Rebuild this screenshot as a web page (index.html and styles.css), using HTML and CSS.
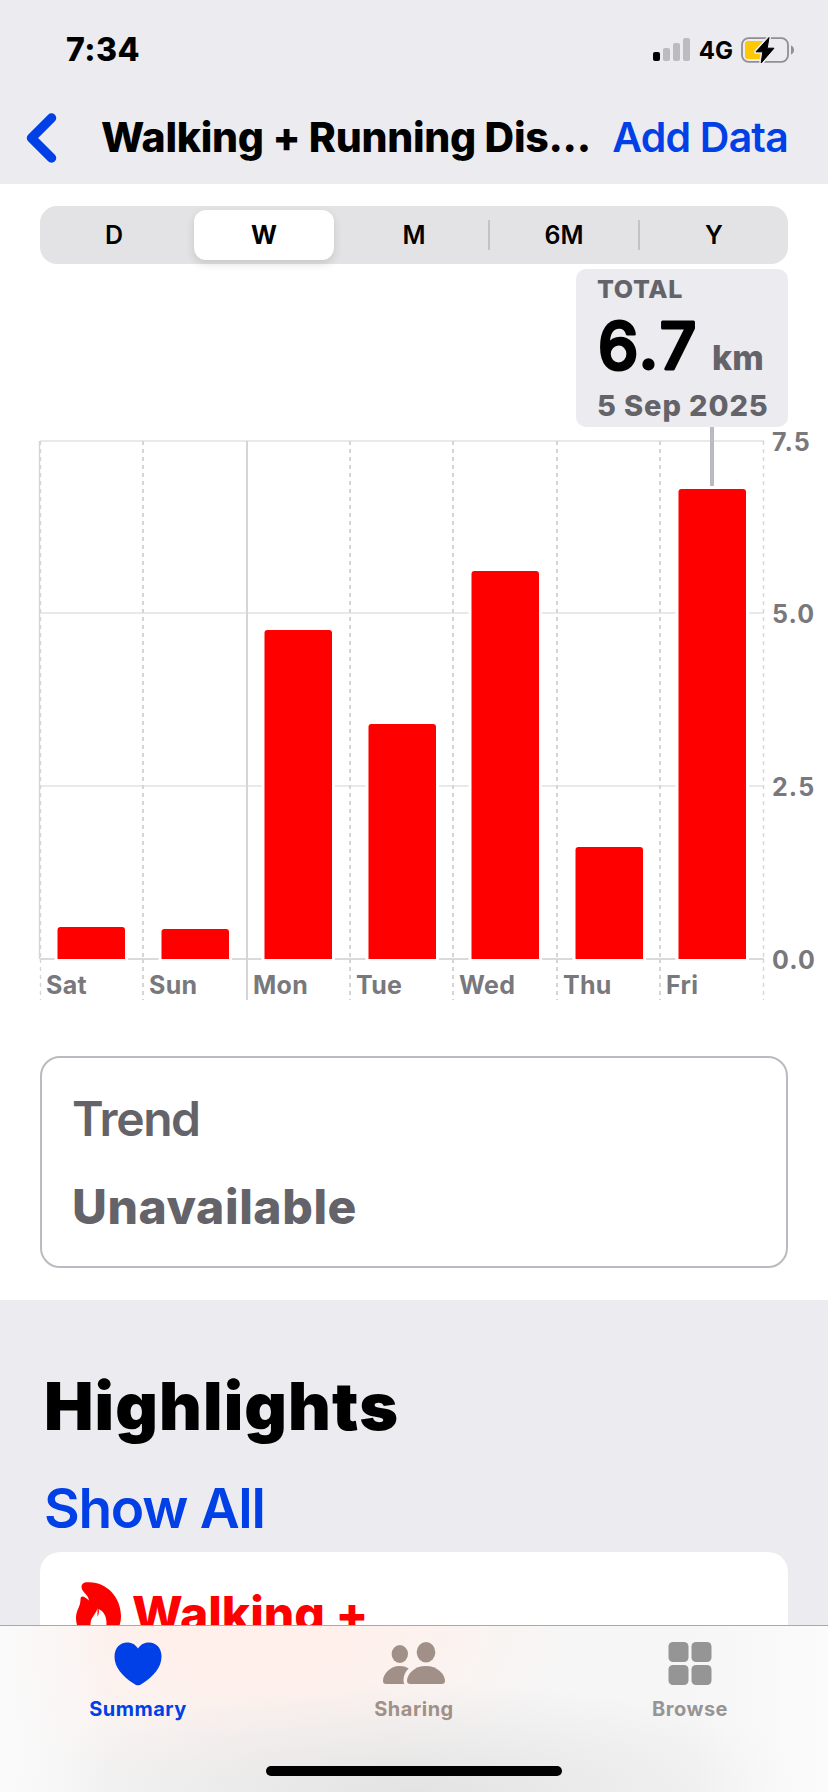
FILE: index.html
```html
<!DOCTYPE html>
<html lang="en">
<head>
    <meta charset="utf-8">
    <title>Walking + Running Distance</title>
    <link rel="stylesheet" href="styles.css">
</head>
<body>
    <header class="header">
        <div class="status">
            <span class="time">7:34</span>
            <div class="status-icons">
                <svg class="signal" width="37" height="24" viewBox="0 0 37 24">
                    <rect x="0" y="14" width="7" height="9" rx="2" fill="#000"/>
                    <rect x="10" y="10" width="7" height="13" rx="2" fill="#bcbbc0"/>
                    <rect x="20" y="5" width="7" height="18" rx="2" fill="#bcbbc0"/>
                    <rect x="30" y="0" width="7" height="23" rx="2" fill="#bcbbc0"/>
                </svg>
                <span class="network">4G</span>
                <svg class="battery" width="54" height="28" viewBox="0 0 54 28">
                    <rect x="1" y="2.2" width="46" height="23.6" rx="6.5" fill="none" stroke="#8f8f94" stroke-width="1.8"/>
                    <path d="M50 9.500c4 1.600 4 7.400 0 9z" fill="#8f8f94"/>
                    <path d="M7 5h17v18H7a3 3 0 0 1-3-3V8a3 3 0 0 1 3-3z" fill="#ffc800"/>
                    <path d="M28 1.500L15 15.800h6.800L20.200 27 33 12.200h-6.800z" fill="#ebebf0" stroke="#ebebf0" stroke-width="4" stroke-linejoin="round"/>
                    <path d="M28 1.500L15 15.800h6.800L20.200 27 33 12.200h-6.800z" fill="#000" stroke="#000" stroke-width="1" stroke-linejoin="round"/>
                </svg>
            </div>
        </div>
        <nav class="nav">
            <svg class="back" width="32" height="50" viewBox="0 0 32 50">
                <path d="M25.500 5L5.500 25l20 20" fill="none" stroke="#0040e6" stroke-width="9.500" stroke-linecap="round" stroke-linejoin="round"/>
            </svg>
            <h1>Walking + Running Dis...</h1>
            <a class="add">Add Data</a>
        </nav>
    </header>

    <main class="main">
        <div class="segments">
            <span class="segment">D</span>
            <span class="segment selected">W</span>
            <span class="segment">M</span>
            <span class="segment divided">6M</span>
            <span class="segment divided">Y</span>
        </div>

        <section class="chart">
            <svg class="plot" width="828" height="792" viewBox="0 264 828 792">
                <g class="grid">
                    <path d="M40 441H764M40 613H764M40 786H764"/>
                    <path class="base" d="M40 959H764"/>
                </g>
                <g class="days">
                    <path d="M143 441V959M350 441V959M453 441V959M557 441V959M660 441V959"/>
                    <path d="M143 959V1000M350 959V1000M453 959V1000M557 959V1000M660 959V1000"/>
                    <path class="thin" d="M40.500 441V959M40.500 959V1000M763.500 441V959M763.500 959V1000"/>
                    <path class="solid thin" d="M39.500 441V959"/>
                    <path class="solid" d="M247 441V1000"/>
                </g>
                <g class="bars">
                    <path d="M57.500 959V930q0-3 3-3H122q3 0 3 3V959z"/>
                    <path d="M161.500 959V932q0-3 3-3H226q3 0 3 3V959z"/>
                    <path d="M264.500 959V633q0-3 3-3H329q3 0 3 3V959z"/>
                    <path d="M368.500 959V727q0-3 3-3H433q3 0 3 3V959z"/>
                    <path d="M471.500 959V574q0-3 3-3H536q3 0 3 3V959z"/>
                    <path d="M575.500 959V850q0-3 3-3H640q3 0 3 3V959z"/>
                    <path d="M678.500 959V492q0-3 3-3H743q3 0 3 3V959z"/>
                </g>
                <path class="stem" d="M712 427V486"/>
                <g class="labels">
                    <text x="46" y="994">Sat</text>
                    <text x="149" y="994">Sun</text>
                    <text x="253" y="994">Mon</text>
                    <text x="356" y="994">Tue</text>
                    <text x="459" y="994">Wed</text>
                    <text x="563" y="994">Thu</text>
                    <text x="666" y="994">Fri</text>
                </g>
                <g class="labels values">
                    <text x="772" y="451">7.5</text>
                    <text x="772" y="623">5.0</text>
                    <text x="772" y="796">2.5</text>
                    <text x="772" y="969">0.0</text>
                </g>
            </svg>
            <div class="tooltip">
                <div class="tip-title">TOTAL</div>
                <div class="tip-value">
                    <svg width="106" height="84" viewBox="0 0 106 84">
                        <text x="1" y="65">6.7</text>
                    </svg>
                    <span>km</span>
                </div>
                <div class="tip-date">5 Sep 2025</div>
            </div>
        </section>

        <section class="trend">
            <div class="trend-title">Trend</div>
            <div class="trend-value">Unavailable</div>
        </section>
    </main>

    <section class="highlights">
        <h2>Highlights</h2>
        <a class="show-all">Show All</a>
        <div class="card">
            <svg class="flame" width="46" height="60" viewBox="0 0 46 60">
                <path d="M11.500 .2C30-1 45 15 45 34c0 14-9 25-22.500 25S0 49 0 36c0-8 4.500-11 4.500-18.500 0-4 3-4 8.500 1C12 12 5.500 10 5.500 5c0-3 2-4.800 6-4.800zM21.500 26c-1 6-7 9-7 16 0 6 3 9 8 9s8-4 8-10c0-7-3-12-8-14 1 3 0 6-1 8 0-3 0-6 0-9z" fill="#f00" fill-rule="evenodd"/>
            </svg>
            <span>Walking +</span>
        </div>
    </section>

    <footer class="tabbar">
        <div class="tabs">
            <div class="tab active">
                <svg width="48" height="44" viewBox="0 0 48 44">
                    <path d="M24 6.500C21 2 17 .5 13 .5 6 .5 .5 6 .5 14.500c0 11 8 20 19.500 27.200 3 2 5 2 8 0C39.500 34.500 47.500 25.500 47.500 14.500 47.500 6 42 .5 35 .5 31 .5 27 2 24 6.500z"/>
                </svg>
                <span>Summary</span>
            </div>
            <div class="tab sharing">
                <svg width="64" height="44" viewBox="0 0 64 44">
                    <ellipse cx="17.800" cy="12" rx="8.200" ry="9"/>
                    <ellipse cx="44" cy="10.300" rx="9.300" ry="10.200"/>
                    <path d="M4 42C2 42 1 41 1 39c0-7 7-15 16.700-15 3.500 0 6.500.8 9 2.500C23 29.500 21.500 34 21.500 38c0 1.500.3 3 .8 4z"/>
                    <path d="M28.300 42c-2 0-3.300-1-3.300-3 0-7 7.300-15 18.800-15s19.200 8 19.200 15c0 2-1.200 3-3.200 3z"/>
                </svg>
                <span>Sharing</span>
            </div>
            <div class="tab">
                <svg width="44" height="44" viewBox="0 0 44 44">
                    <rect x="0.500" y="0" width="20" height="20" rx="4.500"/>
                    <rect x="23.500" y="0" width="20" height="20" rx="4.500"/>
                    <rect x="0.500" y="23" width="20" height="20" rx="4.500"/>
                    <rect x="23.500" y="23" width="20" height="20" rx="4.500"/>
                </svg>
                <span>Browse</span>
            </div>
        </div>
        <div class="home"></div>
    </footer>
</body>
</html>
```
FILE: styles.css
```css
* {
    box-sizing: border-box;
}
body {
    margin: 0;
    width: 828px;
    height: 1792px;
    display: flex;
    flex-direction: column;
    overflow: hidden;
    background-color: #ebebf0;
    color: #000;
    font-family: Inter, "Liberation Sans", sans-serif;
    white-space: nowrap;
}
svg {
    display: block;
    flex: none;
}
h1, h2 {
    margin: 0;
}

/* header */
.header {
    height: 184px;
    flex: none;
}
.status {
    height: 99px;
    padding: 0 33px 0 66px;
    display: flex;
    align-items: center;
    justify-content: space-between;
}
.time {
    font-size: 32px;
    font-weight: 800;
    letter-spacing: 0.5px;
}
.status-icons {
    display: flex;
    align-items: center;
}
.network {
    margin: 2px 8px 0 9px;
    font-size: 24px;
    font-weight: 650;
}
.nav {
    height: 77px;
    padding: 0 40px 0 26px;
    display: flex;
    align-items: center;
}
.nav h1 {
    margin: -2px 0 0 43px;
    font-size: 41px;
    font-weight: 800;
    letter-spacing: -0.3px;
}
.add {
    margin: -2px 0 0 auto;
    color: #0040e6;
    font-size: 41px;
    font-weight: 600;
    letter-spacing: -0.8px;
}

/* range picker */
.main {
    height: 1116px;
    flex: none;
    padding-top: 22px;
    background-color: #fff;
}
.segments {
    height: 58px;
    margin: 0 40px;
    padding: 4px;
    display: grid;
    grid-template-columns: 140px 140px 140px 140px 140px;
    gap: 10px;
    border-radius: 17px;
    background-color: #e3e3e5;
}
.segment {
    position: relative;
    border-radius: 12px;
    text-align: center;
    font-size: 25px;
    font-weight: 600;
    line-height: 50px;
}
.selected {
    background-color: #fff;
    box-shadow: 0 4px 10px rgba(0, 0, 0, 0.12);
    font-weight: 700;
}
.divided::before {
    content: "";
    position: absolute;
    left: -6px;
    top: 10px;
    width: 2px;
    height: 30px;
    background-color: #c3c3c6;
}

/* chart */
.chart {
    position: relative;
    height: 792px;
}
.grid path {
    stroke: #e9e9ea;
    stroke-width: 2;
}
.grid .base {
    stroke: #dadadb;
}
.days path {
    fill: none;
    stroke: #d5d5d7;
    stroke-width: 2;
    stroke-dasharray: 4;
}
.days .thin {
    stroke-width: 1.4;
}
.days .solid {
    stroke-dasharray: none;
}
.bars path {
    fill: #f00;
    stroke: #fff;
    stroke-width: 6;
    paint-order: stroke;
}
.stem {
    stroke: #bbbac0;
    stroke-width: 4;
}
.labels text {
    fill: #78787d;
    font-size: 25px;
    font-weight: 700;
    letter-spacing: 0.3px;
}
.values text {
    letter-spacing: 1.1px;
}
.tooltip {
    position: absolute;
    left: 576px;
    top: 5px;
    width: 212px;
    height: 158px;
    padding: 5px 0 0 21px;
    border-radius: 10px;
    background-color: #ebebf0;
    color: #636369;
    font-weight: 800;
}
.tip-title {
    font-size: 25px;
    line-height: 30px;
    letter-spacing: 0.7px;
}
.tip-value {
    height: 84px;
    display: flex;
}
.tip-value text {
    fill: #000;
    stroke: #000;
    stroke-width: 3px;
    stroke-linejoin: round;
    font-size: 64px;
    font-weight: 500;
    letter-spacing: 2.6px;
}
.tip-value span {
    margin-left: 9px;
    font-size: 34px;
    line-height: 107px;
}
.tip-date {
    font-size: 29px;
    line-height: 35px;
    letter-spacing: 0.9px;
}

/* trend */
.trend {
    height: 212px;
    margin: 0 40px;
    padding: 17px 30px;
    border: 2px solid #bbbac0;
    border-radius: 20px;
    color: #636369;
    font-size: 48px;
    line-height: 88px;
}
.trend-title {
    font-weight: 600;
    letter-spacing: -1.4px;
}
.trend-value {
    font-weight: 800;
    letter-spacing: 0.6px;
}

/* highlights */
.highlights {
    height: 325px;
    flex: none;
    padding: 66px 40px 0;
    overflow: hidden;
}
.highlights h2 {
    padding-left: 4px;
    font-size: 66px;
    font-weight: 900;
    line-height: 80px;
    letter-spacing: 1.1px;
}
.show-all {
    display: block;
    padding-left: 4px;
    color: #0040e6;
    font-size: 55px;
    font-weight: 600;
    line-height: 124px;
    height: 106px;
    letter-spacing: -1.3px;
}
.card {
    height: 120px;
    padding: 30px 36px;
    display: flex;
    border-radius: 20px;
    background-color: #fff;
    color: #f00;
    font-size: 48px;
    font-weight: 800;
    line-height: 63px;
}
.card span {
    margin-left: 10px;
}

/* tab bar */
.tabbar {
    height: 167px;
    flex: none;
    border-top: 1px solid #a9a9ac;
    background:
        linear-gradient(90deg, #fafafa 0, rgba(250, 250, 250, 0) 110px, rgba(250, 250, 250, 0) 690px, #fbfbfc 828px),
        radial-gradient(ellipse 420px 110px at 414px 100%, #e3e3e3, rgba(235, 235, 235, 0)),
        radial-gradient(ellipse 330px 170px at 250px 0, #fff0eb 30%, rgba(255, 240, 235, 0)),
        #f6f6f6;
}
.tabs {
    height: 140px;
    padding-top: 16px;
    display: grid;
    grid-template-columns: 276px 276px 276px;
}
.tab {
    display: flex;
    flex-direction: column;
    align-items: center;
    color: #959595;
    fill: #959595;
    font-size: 20px;
    font-weight: 650;
    letter-spacing: 0.5px;
}
.tab span {
    margin-top: 11px;
    line-height: 24px;
}
.sharing {
    color: #a09088;
    fill: #a09088;
}
.active {
    color: #0040e6;
    fill: #0040e6;
}
.home {
    width: 296px;
    height: 10px;
    margin: 0 auto;
    border-radius: 5px;
    background-color: #000;
}
```
